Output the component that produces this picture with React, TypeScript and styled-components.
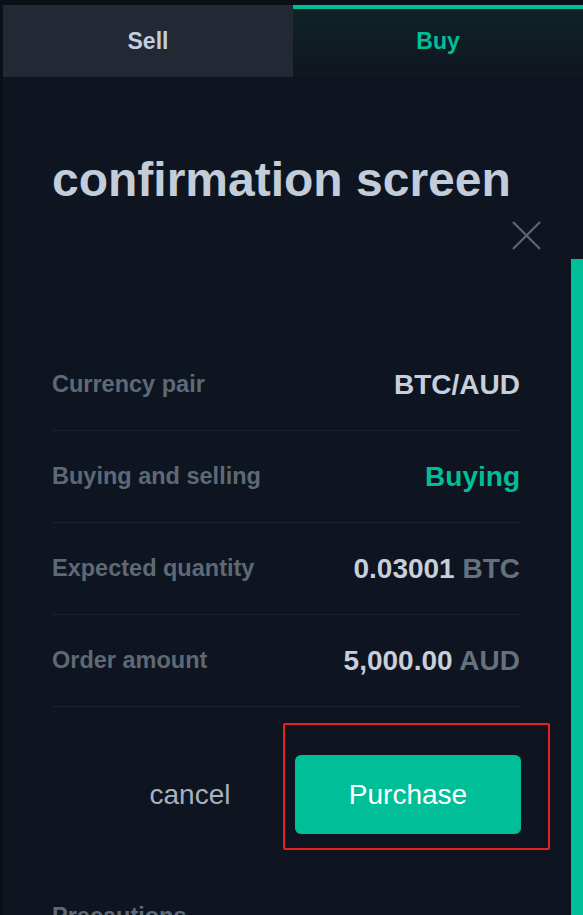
import React from "react";
import styled, { createGlobalStyle } from "styled-components";

const GlobalStyle = createGlobalStyle`
  * { box-sizing: border-box; }
  html, body { margin: 0; padding: 0; background: #0b0f16; }
  body {
    font-family: "Liberation Sans", Arial, sans-serif;
    overflow: hidden;
  }
`;

const Page = styled.div`
  min-height: 100vh;
  padding: 5px 0 0 3px;
  background: #0b0f16;
  display: flex;
  flex-direction: column;
`;

const Tabs = styled.div`
  display: grid;
  grid-template-columns: 290px 1fr;
  height: 72px;
`;

const Tab = styled.button<{ $active?: boolean }>`
  border: 0;
  margin: 0;
  padding: 0;
  font-family: inherit;
  font-size: 23px;
  font-weight: bold;
  cursor: pointer;
  color: ${(p) => (p.$active ? "#00bf98" : "#c3cedd")};
  background: ${(p) =>
    p.$active ? "linear-gradient(180deg, #0f2327 0%, #0f1620 100%)" : "#222834"};
  border-top: ${(p) => (p.$active ? "4px solid #00bf98" : "0")};
  padding-bottom: ${(p) => (p.$active ? "4px" : "0")};
`;

const Body = styled.div`
  position: relative;
  flex: 1;
  background: #0f1520;
  padding: 75px 0 0 49px;
`;

const ScrollThumb = styled.div`
  position: absolute;
  right: 0;
  top: 182px;
  bottom: 0;
  width: 12px;
  background: #00bf98;
`;

const Title = styled.h1`
  margin: 0;
  font-size: 48px;
  line-height: 56px;
  font-weight: bold;
  color: #c3ccd9;
  white-space: nowrap;
`;

const CloseRow = styled.div`
  display: flex;
  justify-content: flex-end;
  padding: 13px 42px 0 0;
`;

const CloseButton = styled.button`
  width: 29px;
  height: 29px;
  padding: 0;
  border: 0;
  background: none;
  cursor: pointer;
  display: flex;
`;

const Details = styled.div`
  width: 468px;
  margin-top: 89px;
`;

const Row = styled.div`
  height: 92px;
  display: flex;
  align-items: center;
  justify-content: space-between;
  border-bottom: 1.5px solid #1b222c;
`;

const Label = styled.span`
  font-size: 23.5px;
  font-weight: bold;
  color: #5e6976;
`;

const Value = styled.span<{ $accent?: boolean }>`
  font-size: 28px;
  font-weight: bold;
  color: ${(p) => (p.$accent ? "#00bf98" : "#c7cfdb")};
`;

const Unit = styled.span`
  color: #66717e;
`;

const Actions = styled.div`
  width: 469px;
  display: flex;
  justify-content: flex-end;
  align-items: center;
  gap: 14px;
  margin-top: 48px;
`;

const CancelButton = styled.button`
  width: 182px;
  height: 79px;
  border: 0;
  background: none;
  font-family: inherit;
  font-size: 28px;
  color: #a8b1be;
  cursor: pointer;
`;

const Highlight = styled.div`
  position: relative;
  &::after {
    content: "";
    position: absolute;
    top: -32px;
    right: -29px;
    bottom: -16px;
    left: -12px;
    border: 2px solid #e3231c;
    border-radius: 2px;
    pointer-events: none;
  }
`;

const PurchaseButton = styled.button`
  width: 226px;
  height: 79px;
  border: 0;
  border-radius: 6px;
  background: #00bf98;
  color: #ffffff;
  font-family: inherit;
  font-size: 28px;
  cursor: pointer;
`;

const SectionTitle = styled.h2`
  margin: 68px 0 0;
  font-size: 23.5px;
  line-height: 29px;
  font-weight: bold;
  color: #5e6976;
`;

const details = [
  { label: "Currency pair", value: "BTC/AUD" },
  { label: "Buying and selling", value: "Buying", accent: true },
  { label: "Expected quantity", value: "0.03001", unit: "BTC" },
  { label: "Order amount", value: "5,000.00", unit: "AUD" },
];

const App = () => {
  return (
    <>
      <GlobalStyle />
      <Page>
        <Tabs>
          <Tab>Sell</Tab>
          <Tab $active>Buy</Tab>
        </Tabs>
        <Body>
          <ScrollThumb />
          <Title>confirmation screen</Title>
          <CloseRow>
            <CloseButton aria-label="close">
              <svg width="29" height="29" viewBox="0 0 29 29">
                <path d="M1 1 L28 28 M28 1 L1 28" stroke="#5b6672" strokeWidth="2.2" fill="none" />
              </svg>
            </CloseButton>
          </CloseRow>
          <Details>
            {details.map((d) => (
              <Row key={d.label}>
                <Label>{d.label}</Label>
                <Value $accent={d.accent}>
                  {d.value}
                  {d.unit && <Unit> {d.unit}</Unit>}
                </Value>
              </Row>
            ))}
          </Details>
          <Actions>
            <CancelButton>cancel</CancelButton>
            <Highlight>
              <PurchaseButton>Purchase</PurchaseButton>
            </Highlight>
          </Actions>
          <SectionTitle>Precautions</SectionTitle>
        </Body>
      </Page>
    </>
  );
};

export default App;
